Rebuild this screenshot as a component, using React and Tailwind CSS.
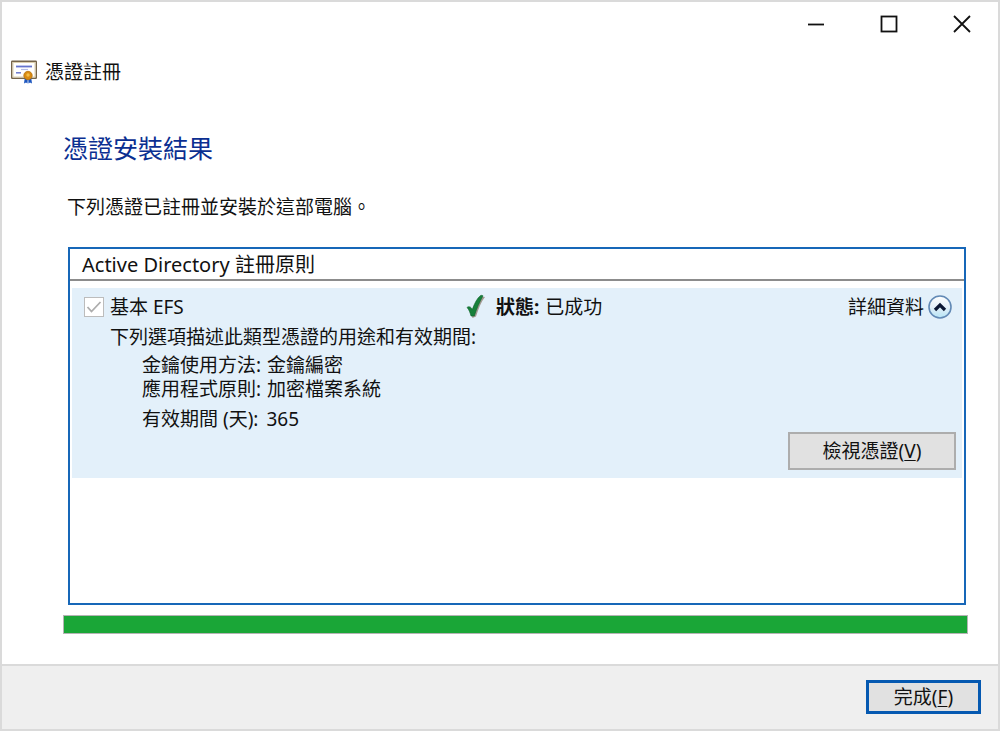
import React from "react";

function CertificateIcon() {
  return (
    <svg width="26" height="24" viewBox="0 0 26 24" aria-hidden="true">
      <rect x="0.75" y="1.25" width="24.5" height="17" rx="0.5" fill="#fff" stroke="#75644a" strokeWidth="1.5" />
      <rect x="2" y="2.5" width="22" height="14.5" fill="#fff" stroke="#dccfae" strokeWidth="1" />
      <path d="M5 6.500h16" stroke="#6573cc" strokeWidth="1.8" />
      <path d="M10 9.500h7" stroke="#b5bce6" strokeWidth="1.2" />
      <path d="M5 12.800h5" stroke="#6a78cc" strokeWidth="1.5" />
      <path d="M13.800 17.500L13 23.500l2-1 1.500 1 .3-5.500zM20.200 17.500l.8 6-2-1-1.500 1-.3-5.500z" fill="#1d56bf" />
      <circle cx="17" cy="15.500" r="4.200" fill="#d98a12" stroke="#b8740e" strokeWidth="0.8" />
      <circle cx="17" cy="15" r="1.700" fill="#f6bd45" />
    </svg>
  );
}

function SuccessIcon() {
  return (
    <svg width="20" height="25" viewBox="0 0 20 25" aria-hidden="true">
      <path d="M3 14l4 1.500C9 10 12 5 16 2.500l3 .5C15 8 12.500 15 10 22.500L6.500 24z" fill="#a39a92" />
      <path d="M1 13.500C2.500 12 5 12.500 6.300 15.500 8.500 9.500 11 4 15 1.200l2 .6C13.500 8 10.500 15 8.300 22H5C4 18.500 3 15.500 1 13.500z" fill="#17803a" stroke="#0e632a" strokeWidth="0.6" />
    </svg>
  );
}

function CollapseIcon() {
  return (
    <svg width="24" height="24" viewBox="0 0 24 24" aria-hidden="true">
      <defs>
        <linearGradient id="collapse-fill" x1="0" y1="0" x2="0" y2="1">
          <stop offset="0" stopColor="#ffffff" />
          <stop offset="0.5" stopColor="#e4eff8" />
          <stop offset="1" stopColor="#b5e4f5" />
        </linearGradient>
      </defs>
      <circle cx="12" cy="12" r="11" fill="url(#collapse-fill)" stroke="#6289b5" strokeWidth="1.600" />
      <path d="M7 15l5-5 5 5" fill="none" stroke="#0c1633" strokeWidth="3.200" />
    </svg>
  );
}

function TitleBar() {
  const button = "flex h-11 w-[73px] items-center justify-center";
  return (
    <div className="flex justify-end">
      <button type="button" aria-label="最小化" className={button}>
        <svg width="18" height="18" viewBox="0 0 18 18"><path d="M1 9.500h16" stroke="#111" strokeWidth="1.800" /></svg>
      </button>
      <button type="button" aria-label="最大化" className={button}>
        <svg width="18" height="18" viewBox="0 0 18 18"><rect x="1.500" y="1.500" width="15" height="15" fill="none" stroke="#111" strokeWidth="1.800" /></svg>
      </button>
      <button type="button" aria-label="關閉" className={button}>
        <svg width="18" height="18" viewBox="0 0 18 18"><path d="M1 1l16 16M17 1L1 17" stroke="#111" strokeWidth="1.800" /></svg>
      </button>
    </div>
  );
}

function PolicyItem() {
  return (
    <section className="mx-0.5 mt-[7px] bg-[#e3f0fa] pt-1.5 pr-1.5 pb-2">
      <div className="grid grid-cols-2 items-center">
        <label className="flex items-center gap-1.5 pl-3">
          <span className="grid size-5 place-items-center">
            <input type="checkbox" checked disabled readOnly className="col-start-1 row-start-1 size-5 appearance-none border border-[#bcbcbc] bg-white" />
            <svg className="pointer-events-none col-start-1 row-start-1" width="16" height="14" viewBox="0 0 16 14" aria-hidden="true">
              <path d="M1.500 7l4 4.500L14.500 2" fill="none" stroke="#adadad" strokeWidth="1.800" />
            </svg>
          </span>
          <span>基本 EFS</span>
        </label>
        <div className="flex items-center justify-between">
          <div className="-ml-12 flex items-center gap-2.5">
            <SuccessIcon />
            <span className="flex gap-1.5"><strong className="font-bold">狀態:</strong> 已成功</span>
          </div>
          <button type="button" aria-expanded="true" className="flex items-center gap-1 pr-1">
            詳細資料
            <CollapseIcon />
          </button>
        </div>
      </div>
      <div className="pt-1.5 pl-[38px]">
        <p>下列選項描述此類型憑證的用途和有效期間:</p>
        <dl className="mt-1 pl-8">
          <div className="flex gap-1.5"><dt>金鑰使用方法:</dt><dd>金鑰編密</dd></div>
          <div className="flex gap-1.5"><dt>應用程式原則:</dt><dd>加密檔案系統</dd></div>
          <div className="mt-1.5 flex gap-2"><dt>有效期間 (天):</dt><dd>365</dd></div>
        </dl>
      </div>
      <div className="mt-px flex justify-end">
        <button type="button" className="h-[38px] w-[168px] border-2 border-[#adadad] bg-[#e1e1e1]">
          檢視憑證(<u className="underline-offset-2">V</u>)
        </button>
      </div>
    </section>
  );
}

export default function App() {
  return (
    <div className="flex min-h-screen flex-col border-2 border-[#dadada] bg-white font-['Noto_Sans','Noto_Sans_CJK_TC',sans-serif] text-[19px] leading-6 text-[#111]">
      <TitleBar />
      <header className="flex items-center gap-2 px-[9px] pt-3.5">
        <CertificateIcon />
        <span>憑證註冊</span>
      </header>
      <main className="flex grow flex-col pt-12 pr-[30px] pb-[30px] pl-[61px]">
        <h1 className="text-[25px] leading-8 text-[#0b2f91]">憑證安裝結果</h1>
        <p className="mt-[31px] pl-1">下列憑證已註冊並安裝於這部電腦。</p>
        <div className="mt-7 mr-0.5 ml-[5px] grow border-2 border-[#1767b8]">
          <h2 className="border-b-2 border-[#8c8c8c] px-3 pt-1 pb-0.5 text-[20px] leading-6">Active Directory 註冊原則</h2>
          <PolicyItem />
        </div>
        <div role="progressbar" aria-label="安裝進度" aria-valuenow={100} aria-valuemin={0} aria-valuemax={100} className="mt-2.5 h-[19px] border border-[#b4b4b4] bg-[#e6e6e6]">
          <div className="h-full w-full bg-[#1aa637]" />
        </div>
      </main>
      <footer className="flex justify-end border-t-2 border-[#dadada] bg-[#efefef] px-[17px] pt-3.5 pb-[15px]">
        <button type="button" className="h-[34px] w-[115px] border-3 border-[#0559b1] bg-[#e1e1e1]">
          完成(<u className="underline-offset-2">F</u>)
        </button>
      </footer>
    </div>
  );
}
